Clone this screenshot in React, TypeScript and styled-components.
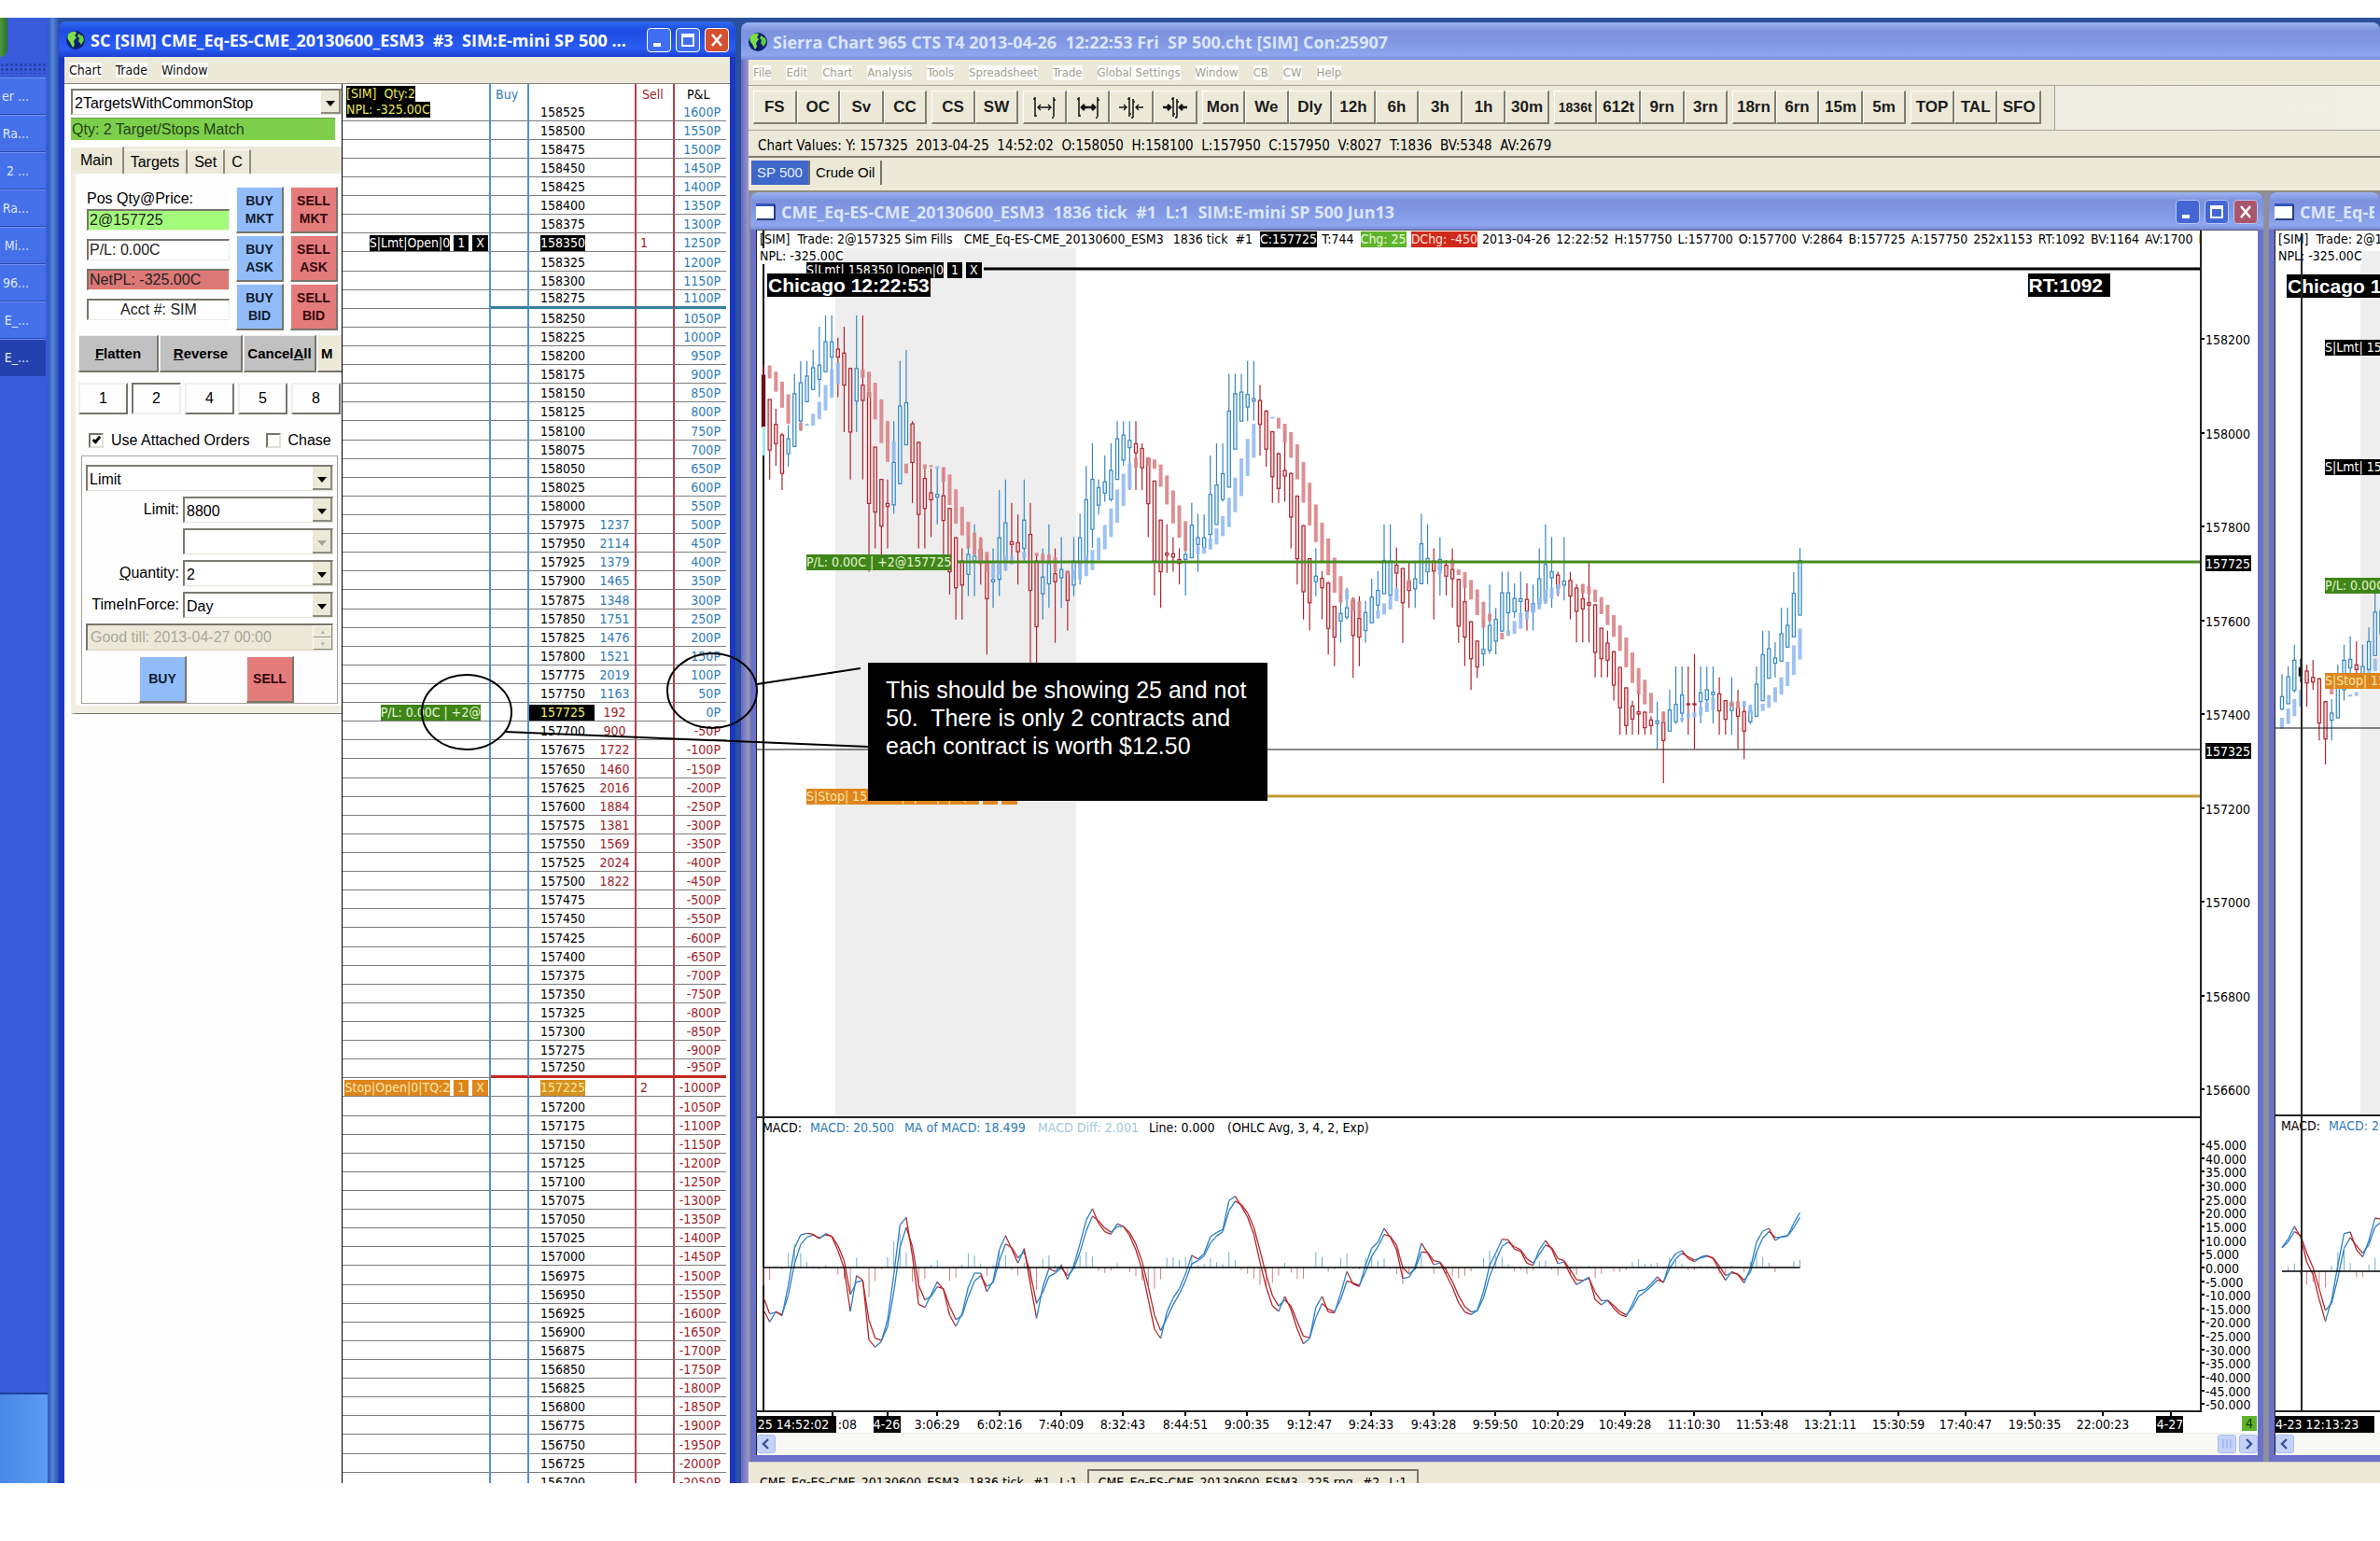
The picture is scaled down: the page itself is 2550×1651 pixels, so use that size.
import React from "react";
import styled, { createGlobalStyle, css } from "styled-components";

const UI = `"DejaVu Sans Condensed", "DejaVu Sans", sans-serif`;
const FORM = `"Liberation Sans", Arial, sans-serif`;
const TITLE = `"Open Sans", "Noto Sans", sans-serif`;

const BLUE = "#2f7db8";
const RED = "#a3222c";
const BEIGE = "#ece9d8";

const GlobalStyle = createGlobalStyle`
  *, *::before, *::after { box-sizing: border-box; }
  body { margin: 0; background: #fff; font-family: ${UI}; font-size: 14px; color: #000; }
  button, select, input { font: inherit; color: inherit; border-radius: 0; margin: 0; }
`;

const Page = styled.div`
  height: 100vh;
  padding: 19px 0 62px;
  overflow: hidden;
  white-space: nowrap;
`;

const Desktop = styled.div`
  position: relative;
  height: 100%;
  display: flex;
  overflow: hidden;
  background: #2a4f9c;
`;

/* ---------- taskbar ---------- */

const Taskbar = styled.nav`
  flex: 0 0 51px;
  display: flex;
  flex-direction: column;
  background: #3a5bdc;
  overflow: hidden;
`;

const StartOrb = styled.button`
  height: 42px;
  width: 8px;
  padding: 0;
  border: 0;
  border-radius: 0 8px 20px 0;
  background: linear-gradient(90deg, #4c9a3c, #2f6f2a);
`;

const Grip = styled.div`
  height: 12px;
  margin: 6px 2px 4px 0;
  background: radial-gradient(circle, #2441a8 1px, transparent 2px) 0 0 / 5px 5px;
`;

const TaskButton = styled.button<{ $active?: boolean }>`
  height: 40px;
  width: 49px;
  flex: none;
  padding: 0 18px 0 0;
  border: 0;
  border-top: 1px solid #6f93f4;
  border-bottom: 1px solid #2746b0;
  display: flex;
  justify-content: flex-end;
  align-items: center;
  color: #dfe8ff;
  background: ${(p) => (p.$active ? "#2440ae" : "#4470ea")};
`;

const Tray = styled.div`
  margin-top: auto;
  height: 97px;
  border-top: 2px solid #1f3f9c;
  background: linear-gradient(90deg, #4a88e4, #5a9cf4);
`;

const TaskbarEdge = styled.div`
  flex: 0 0 12px;
  background: linear-gradient(90deg, #2b56b8, #5584dc 45%, #2a50a8);
`;

/* ---------- window chrome ---------- */

const TitleBar = styled.header<{ $kind: "active" | "idle"; $h: number; $pad: number }>`
  flex: 0 0 ${(p) => p.$h}px;
  display: flex;
  align-items: center;
  gap: 5px;
  padding: 2px ${(p) => p.$pad}px 0;
  overflow: hidden;
  font: bold 18px/24px ${TITLE};
  white-space: pre;
  ${(p) =>
    p.$kind === "active"
      ? css`
          color: #fff;
          border-radius: 8px 8px 0 0;
          background: linear-gradient(#2f6cf0, #1c4be0 25%, #2a5cf4 75%, #1a3fd0);
        `
      : css`
          color: #dbe6fb;
          border-radius: 8px 8px 0 0;
          background: linear-gradient(#9db4f2, #7d92de 22%, #8096e2 50%, #8da6ee 88%, #7a88dc);
        `}
`;

const TitleText = styled.span`
  flex: 1;
  min-width: 0;
  overflow: hidden;
`;

const Buttons = styled.div<{ $gap: number }>`
  display: flex;
  gap: ${(p) => p.$gap}px;
`;

const CaptionButton = styled.button<{ $close?: boolean; $idle?: boolean }>`
  width: 26px;
  height: 26px;
  padding: 0;
  display: grid;
  place-items: center;
  border: 1px solid ${(p) => (p.$idle ? "#b9c7f4" : "#fff")};
  border-radius: 4px;
  background: ${(p) =>
    p.$close ? (p.$idle ? "#a9566c" : "#d4502e") : p.$idle ? "#4466d4" : "#3f6ff0"};
`;

const MenuBar = styled.nav<{ $h: number; $idle?: boolean }>`
  flex: 0 0 ${(p) => p.$h}px;
  display: flex;
  align-items: center;
  gap: ${(p) => (p.$idle ? 16 : 15)}px;
  padding: 0 5px;
  background: ${BEIGE};
  color: ${(p) => (p.$idle ? "#a3a196" : "#111")};
  font-size: ${(p) => (p.$idle ? 13 : 14)}px;
`;

const MenuItem = styled.button`
  padding: 0;
  border: 0;
  line-height: 16px;
  background: #fcfcf8;
`;

/* ---------- trade window ---------- */

const TradeWindow = styled.section`
  flex: 0 0 725px;
  margin: 4px 6px 0 0;
  display: flex;
  flex-direction: column;
  overflow: hidden;
`;

const TradeFrame = styled.div`
  flex: 1;
  min-height: 0;
  display: flex;
  flex-direction: column;
  border-left: 6px solid #1a38c4;
  border-right: 6px solid #1a38c4;
  background: #fff;
`;

const TradeBody = styled.div`
  flex: 1;
  min-height: 0;
  display: flex;
  overflow: hidden;
  border-top: 1px solid #88867c;
`;

const FormPanel = styled.form`
  flex: 0 0 298px;
  padding: 5px 0 0 7px;
  overflow: hidden;
  border-right: 1px solid #000;
  background: #fefefe;
  font: 16px/20px ${FORM};
`;

const SelectShell = styled.span<{ $disabled?: boolean }>`
  position: relative;
  display: block;
  height: 28px;
  flex: 1;
  border: 1px solid #e4e2d6;
  border-top: 2px solid #7b7a72;
  border-left: 2px solid #7b7a72;
  background: #fff;
  &::after {
    content: "";
    position: absolute;
    right: 6px;
    top: 11px;
    border: 5px solid transparent;
    border-top: 6px solid ${(p) => (p.$disabled ? "#a9a698" : "#000")};
    border-bottom: 0;
  }
  &::before {
    content: "";
    position: absolute;
    right: 0;
    top: 0;
    bottom: 0;
    width: 21px;
    background: ${BEIGE};
    border-right: 2px solid #8e8c80;
    border-bottom: 2px solid #8e8c80;
    pointer-events: none;
  }
`;

const Select = styled.select`
  width: 100%;
  height: 100%;
  padding: 2px 2px 0;
  border: 0;
  appearance: none;
  background: transparent;
  outline: 0;
`;

const StatusLine = styled.output`
  display: block;
  height: 24px;
  margin: 3px 7px 7px 0;
  line-height: 24px;
  padding-left: 1px;
  border-top: 1px solid #6a9c50;
  background: #7dcf4b;
  color: #24401a;
`;

const TabStrip = styled.div`
  height: 29px;
  display: flex;
  align-items: flex-end;
  background: ${BEIGE};
`;

const FormTab = styled.button<{ $on?: boolean }>`
  height: ${(p) => (p.$on ? 29 : 26)}px;
  padding: 0 ${(p) => (p.$on ? 10 : 7)}px;
  border: 0;
  border-top: 1px solid #fff;
  border-right: 2px solid #8e8c80;
  background: ${BEIGE};
`;

const TabPage = styled.div`
  padding: 14px 0 1px 3px;
  border-left: 5px solid #f1efe4;
  border-bottom: 1px solid #77756b;
  box-shadow: inset 0 -8px 0 #f1efe4;
  height: 579px;
`;

const TradeGrid = styled.div`
  display: grid;
  grid-template-columns: 153px 51px 51px;
  column-gap: 7px;
  padding-left: 9px;
`;

const ReadoutStack = styled.div`
  display: flex;
  flex-direction: column;
  gap: 9px;
`;

const StackLabel = styled.label`
  display: block;
  height: 24px;
  line-height: 26px;
`;

const Readout = styled.input<{ $bg?: string; $center?: boolean }>`
  width: 153px;
  height: 23px;
  padding: 0 1px;
  border: 1px solid #eceadf;
  border-top: 2px solid #77756b;
  border-left: 2px solid #77756b;
  background: ${(p) => p.$bg ?? "#fff"};
  text-align: ${(p) => (p.$center ? "center" : "left")};
  color: #222;
`;

const ButtonColumn = styled.div`
  display: flex;
  flex-direction: column;
  gap: 2px;
`;

const SideButton = styled.button<{ $side: "buy" | "sell" }>`
  width: 51px;
  height: 50px;
  padding: 0;
  font-weight: bold;
  font-size: 14px;
  line-height: 19px;
  white-space: normal;
  border: 1px solid #f5f5f5;
  border-right: 2px solid #77756b;
  border-bottom: 2px solid #77756b;
  background: ${(p) => (p.$side === "buy" ? "#92bcf9" : "#e57c7c")};
  color: ${(p) => (p.$side === "buy" ? "#101c30" : "#35080c")};
`;

const ActionRow = styled.div`
  display: grid;
  grid-template-columns: 86px 89px 78px 30px;
  gap: 1px;
  margin-top: 5px;
`;

const ActionButton = styled.button<{ $plain?: boolean }>`
  height: 40px;
  padding: 0 0 0 ${(p) => (p.$plain ? 3 : 0)}px;
  overflow: hidden;
  text-align: ${(p) => (p.$plain ? "left" : "center")};
  font-weight: bold;
  font-size: 15px;
  border: 1px solid #efefef;
  border-right: 2px solid #77756b;
  border-bottom: 2px solid #77756b;
  background: ${(p) => (p.$plain ? BEIGE : "#c1c1c1")};
`;

const QuantityRow = styled.div`
  display: grid;
  grid-template-columns: repeat(5, 53px);
  gap: 4px;
  margin-top: 11px;
`;

const QuantityButton = styled.button<{ $down?: boolean }>`
  height: 34px;
  padding: 0;
  background: #fefefe;
  border: 2px solid;
  border-color: ${(p) => (p.$down ? "#77756b #eee #eee #77756b" : "#eee #77756b #77756b #eee")};
`;

const CheckRow = styled.div`
  display: flex;
  gap: 17px;
  margin: 18px 0 6px 11px;
  height: 20px;
`;

const CheckLabel = styled.label`
  display: flex;
  align-items: center;
  gap: 8px;
`;

const Checkbox = styled.input`
  appearance: none;
  width: 16px;
  height: 16px;
  border: 2px solid;
  border-color: #77756b #e2e0d4 #e2e0d4 #77756b;
  background: #fff;
  display: grid;
  place-items: center;
  &:checked::after {
    content: "";
    width: 5px;
    height: 9px;
    margin-top: -3px;
    border: solid #000;
    border-width: 0 3px 3px 0;
    transform: rotate(40deg);
  }
`;

const OrderBox = styled.fieldset`
  margin: 0 4px 0 3px;
  min-width: 0;
  height: 266px;
  padding: 9px 4px 0 4px;
  border: 1px solid #a5a398;
  display: flex;
  flex-direction: column;
  gap: 6px;
`;

const FieldRow = styled.div`
  display: flex;
  align-items: center;
  gap: 4px;
`;

const FieldLabel = styled.label`
  flex: 0 0 100px;
  text-align: right;
`;

const DateBox = styled.div`
  display: flex;
  height: 30px;
  border: 1px solid #d4d1c2;
  border-top: 2px solid #77756b;
  border-left: 2px solid #77756b;
  background: ${BEIGE};
`;

const DateInput = styled.input`
  flex: 1;
  min-width: 0;
  padding: 0 3px;
  border: 0;
  background: transparent;
  &:disabled { color: #a9a698; }
`;

const Spinner = styled.div`
  width: 21px;
  display: flex;
  flex-direction: column;
`;

const SpinButton = styled.button`
  flex: 1;
  padding: 0;
  border: 1px solid #fff;
  border-right-color: #8e8c80;
  border-bottom-color: #8e8c80;
  background: ${BEIGE};
  color: #a9a698;
  font-size: 7px;
  line-height: 8px;
`;

const SubmitRow = styled.div`
  display: flex;
  justify-content: space-between;
  padding: 0 42px 0 57px;
`;

/* ---------- price ladder ---------- */

const Ladder = styled.table`
  flex: 0 0 411px;
  align-self: flex-start;
  table-layout: fixed;
  width: 411px;
  border-spacing: 0;
  font-size: 14px;
  line-height: 17px;
  th, td { padding: 0; font-weight: normal; text-align: left; overflow: hidden; }
  col:nth-child(1) { width: 159px; }
  col:nth-child(2) { width: 41px; }
  col:nth-child(3) { width: 70px; }
  col:nth-child(4) { width: 45px; }
  col:nth-child(5) { width: 41px; }
  col:nth-child(6) { width: 55px; }
`;

type Tone = "none" | "blue" | "red";
const toneColor = (t?: Tone) => (t === "blue" ? BLUE : t === "red" ? RED : "#000");
const lineColor = (t?: Tone) => (t === "blue" ? "#4a94d4" : "#b04048");

const HeadCell = styled.th<{ $line?: Tone; $tone?: Tone }>`
  && { overflow: visible; }
  position: relative;
  height: 20px;
  color: ${(p) => toneColor(p.$tone)};
  border-right: ${(p) => (p.$line ? `2px solid ${lineColor(p.$line)}` : 0)};
`;

const HeadText = styled.span<{ $pad: number }>`
  display: block;
  padding: 2px 0 0 ${(p) => p.$pad}px;
`;

const LadderRow = styled.tr<{ $mark?: string }>`
  height: 20px;
  &:nth-child(9n) { height: 21px; }
  td { border-bottom: 1px solid #7c7c7c; }
  ${(p) =>
    p.$mark &&
    css`
      td:not(:first-child) { border-bottom: 3px solid ${p.$mark}; }
    `}
`;

const Cell = styled.td<{ $line?: Tone; $tone?: Tone; $end?: boolean }>`
  && { text-align: ${(p) => (p.$end ? "right" : "left")}; }
  vertical-align: bottom;
  color: ${(p) => toneColor(p.$tone)};
  border-right: ${(p) => (p.$line ? `2px solid ${lineColor(p.$line)}` : 0)};
`;

const PnlText = styled.span`
  padding-right: 6px;
`;

const Price = styled.span<{ $bg?: string; $fg?: string; $wide?: boolean }>`
  display: inline-block;
  margin-left: ${(p) => (p.$wide ? 0 : 12)}px;
  width: ${(p) => (p.$wide ? "100%" : "auto")};
  padding-left: ${(p) => (p.$wide ? 12 : 0)}px;
  background: ${(p) => p.$bg ?? "transparent"};
  color: ${(p) => p.$fg ?? "#000"};
`;

const SizeText = styled.span`
  display: block;
  text-align: center;
`;

const OrderTags = styled.div<{ $inset: number }>`
  display: flex;
  justify-content: flex-end;
  gap: 4px;
  padding-right: ${(p) => p.$inset}px;
`;

const Tag = styled.span<{ $bg: string; $fg?: string; $box?: boolean }>`
  flex: none;
  height: 17px;
  line-height: 17px;
  padding: 0 ${(p) => (p.$box ? 4 : 0)}px;
  background: ${(p) => p.$bg};
  color: ${(p) => p.$fg ?? "#fff"};
  white-space: pre;
`;

const SimBadge = styled.div`
  position: absolute;
  left: 4px;
  top: 2px;
  z-index: 1;
  display: flex;
  flex-direction: column;
  align-items: flex-start;
`;

/* ---------- main chart application ---------- */

const MainWindow = styled.section`
  flex: 1;
  min-width: 0;
  margin-top: 5px;
  display: flex;
  flex-direction: column;
  overflow: hidden;
  border-radius: 8px 8px 0 0;
  background: linear-gradient(90deg, #6468c4, #9a98c8 8px);
`;

const MainBody = styled.div`
  flex: 1;
  min-height: 0;
  display: flex;
  flex-direction: column;
  margin-left: 8px;
  background: ${BEIGE};
`;

const Toolbar = styled.div`
  flex: 0 0 49px;
  display: flex;
  border-top: 1px solid #a8a698;
  border-bottom: 1px solid #a8a698;
  background: linear-gradient(90deg, ${BEIGE}, #efeee4);
`;

const ToolGroups = styled.div`
  flex: 0 0 1400px;
  display: flex;
  gap: 5px;
  padding: 5px 14px 6px 5px;
  border-right: 1px solid #a8a698;
  background: ${BEIGE};
`;

const ToolGroup = styled.div<{ $n: number }>`
  flex: ${(p) => p.$n} 1 0;
  display: flex;
`;

const ToolButton = styled.button<{ $small?: boolean }>`
  flex: 1 1 0;
  min-width: 0;
  padding: 0;
  display: grid;
  place-items: center;
  border: 1px solid #fff;
  border-right: 2px solid #807e72;
  border-bottom: 2px solid #807e72;
  background: ${BEIGE};
  font: bold ${(p) => (p.$small ? 14 : 17)}px/20px ${FORM};
  color: #1c1c1c;
`;

const ValuesBar = styled.div`
  flex: 0 0 29px;
  display: flex;
  align-items: center;
  padding: 4px 10px 0;
  border-bottom: 2px solid #807e72;
  font-size: 15px;
  white-space: pre;
`;

const BookTabs = styled.div`
  flex: 0 0 37px;
  display: flex;
  align-items: flex-start;
  padding: 3px 3px 0;
  border-bottom: 2px solid #8e8c80;
`;

const BookTab = styled.button<{ $on?: boolean }>`
  height: 26px;
  padding: 0 6px;
  border: 0;
  border-right: 2px solid #77756b;
  background: ${(p) => (p.$on ? "#3f66c9" : BEIGE)};
  color: ${(p) => (p.$on ? "#e4ecff" : "#000")};
  font: 15px/20px ${FORM};
`;

const Mdi = styled.div`
  flex: 1;
  min-height: 0;
  display: flex;
  gap: 6px;
  padding-left: 2px;
  background: #8d8f9c;
`;

const ChildWindow = styled.section<{ $width?: number }>`
  ${(p) => (p.$width ? `flex: 0 0 ${p.$width}px;` : "flex: 1;")}
  min-width: 0;
  display: flex;
  flex-direction: column;
  background: #6b70c8;
  overflow: hidden;
  border-radius: 8px 8px 0 0;
`;

const ChildBody = styled.div<{ $edge: number }>`
  flex: 1;
  min-height: 0;
  margin: 0 ${(p) => p.$edge}px 7px 6px;
  display: flex;
  flex-direction: column;
  background: #fff;
  border-left: 1px solid #222;
  border-top: 1px solid #555;
`;

const PlotRow = styled.div`
  flex: 1;
  min-height: 0;
  display: flex;
`;

const Plot = styled.div`
  position: relative;
  flex: 1;
  min-width: 0;
  overflow: hidden;
  border-bottom: 2px solid #222;
`;

const Canvas = styled.svg`
  display: block;
  width: 100%;
  height: 100%;
`;

const TimeCanvas = styled.svg`
  display: block;
  width: 100%;
  height: 22px;
`;

const Axis = styled.div`
  flex: 0 0 62px;
  border-left: 2px solid #222;
`;

const HeaderLine = styled.div`
  position: absolute;
  top: 1px;
  left: 3px;
  line-height: 17px;
  white-space: pre;
  display: flex;
`;

const SecondLine = styled(HeaderLine)`
  top: 19px;
  background: #fff;
`;

const Pin = styled.div<{ $x: number; $y: number; $right?: boolean }>`
  position: absolute;
  ${(p) => (p.$right ? `right: ${p.$x}px;` : `left: ${p.$x}px;`)}
  top: ${(p) => p.$y}px;
  display: flex;
  gap: 4px;
`;

const Banner = styled.div<{ $tail?: number }>`
  height: 25px;
  padding: 0 ${(p) => p.$tail ?? 1}px 0 1px;
  background: #000;
  color: #fff;
  font: bold 21px/25px ${FORM};
`;

const Segment = styled.span<{ $bg?: string; $fg?: string; $gap?: number }>`
  background: ${(p) => p.$bg ?? "transparent"};
  color: ${(p) => p.$fg ?? "#000"};
  margin-right: ${(p) => p.$gap ?? 6}px;
`;

const TimeRow = styled.div`
  position: relative;
  flex: 0 0 22px;
`;

const CornerBadge = styled.span`
  position: absolute;
  right: 1px;
  top: 4px;
  width: 16px;
  line-height: 16px;
  text-align: center;
  background: #5fb32c;
  color: #173a05;
`;

const ScrollTrack = styled.div`
  flex: 0 0 24px;
  display: flex;
  gap: 3px;
  background: #f8f8f4;
  border-top: 1px solid #eeede6;
`;

const ScrollButton = styled.button<{ $push?: boolean }>`
  width: 20px;
  height: 20px;
  margin: 1px 0 0 ${(p) => (p.$push ? "auto" : 0)};
  padding: 0;
  display: grid;
  place-items: center;
  border: 1px solid #a9bcf0;
  border-radius: 3px;
  background: #c5d3fb;
`;

const BottomTabs = styled.div`
  flex: 0 0 23px;
  padding: 7px 0 0 2px;
  display: flex;
  overflow: hidden;
  background: ${BEIGE};
  border-top: 1px solid #cfccbd;
`;

const BottomTab = styled.button<{ $on?: boolean }>`
  height: 34px;
  padding: 4px 10px 0;
  border: 0;
  border-top: 2px solid ${(p) => (p.$on ? "#77756b" : BEIGE)};
  border-left: ${(p) => (p.$on ? "2px solid #77756b" : 0)};
  border-right: ${(p) => (p.$on ? "2px solid #77756b" : 0)};
  background: ${BEIGE};
  display: flex;
  gap: 10px;
  font-size: 14px;
`;

const Crosshair = styled.div`
  position: absolute;
  left: 27px;
  top: 3px;
  bottom: 0;
  border-left: 2px solid #222;
`;

/* ---------- annotations ---------- */

const AnnotationLayer = styled.svg`
  position: absolute;
  left: 0;
  top: 0;
  width: 1400px;
  height: 900px;
  pointer-events: none;
`;

const Note = styled.aside`
  position: absolute;
  left: 930px;
  top: 691px;
  width: 428px;
  height: 148px;
  padding: 14px 19px;
  background: #000;
  color: #fff;
  font: 25px/30px ${FORM};
  white-space: pre;
`;

/* ---------- data ---------- */

type Bar = [string, number, number, number, number];
// direction, high, body top, body bottom, low
const EARLY: Bar[] = [
  ["r",200,232,387,390],["r",305,305,457,545],["r",333,380,438,505],["r",405,412,527,577],["b",382,423,468,507],
  ["b",228,288,446,446],["b",190,255,370,400],["b",190,235,312,312],["b",157,210,275,275],["b",87,202,245,298],
  ["b",53,132,222,222],["b",53,132,178,285],["r",120,154,178,298],["r",87,166,262,403],["r",210,212,403,545],
  ["b",53,212,310,403],["r",53,262,308,545],["r",285,285,617,822],["r",448,448,643,752],["r",545,545,685,787],
  ["r",545,617,626,752],["b",370,494,621,648],["b",190,325,558,558],["b",157,315,441,441],["r",370,378,494,615],
  ["r",432,434,650,752],["r",512,542,632,752],["r",512,585,606,718],["b",512,590,598,680],["r",512,594,668,787],
  ["r",630,632,822,890],["r",718,720,870,965],["r",752,790,862,965],["b",715,770,830,895],["b",680,775,790,895],
  ["r",718,755,797,860],["r",770,790,903,1070],["b",752,845,852,930],["b",577,720,845,895],["b",545,675,787,820],
  ["r",615,732,740,787],["r",650,735,762,860],["b",545,667,752,790],["r",615,710,878,1095],["r",770,790,987,1120],
  ["b",752,838,888,965],["b",680,790,858,930],["r",752,828,852,1035],["b",718,815,840,930],["r",820,824,908,998],
  ["b",718,790,862,895],["b",648,720,800,860],["b",505,606,790,800],["b",437,545,695,750],["b",545,570,622,650],
  ["b",473,552,586,612],["b",437,518,605,612],["b",370,423,545,545],["b",370,412,487,505],["b",370,428,450,577],
  ["r",370,438,465,577],["r",437,452,510,577],["r",480,482,618,718],["r",548,550,790,893],["r",667,667,822,930],
  ["r",680,766,772,825],["r",718,768,778,822],["r",752,785,797,860],["b",680,770,785,893],["b",615,682,780,780],
  ["b",648,720,740,822],["b",650,720,750,755],["b",473,590,710,750],["b",437,562,680,680],["b",437,528,605,612],
  ["b",228,340,568,568],["b",228,288,454,454],["b",228,283,370,370],["b",190,290,328,370],["b",190,303,310,368],
  ["r",262,308,380,473],["r",337,340,454,507],["r",400,402,537,615],["r",465,468,572,615],["r",400,518,535,612],
  ["r",525,527,658,752],["r",593,595,783,860],["r",682,684,882,965],["r",782,783,915,998],["b",752,835,852,895],
  ["r",820,842,870,965],["r",852,856,992,1070],["r",925,926,1018,1105],["b",893,947,970,1035],["b",870,930,958,965],
  ["r",898,908,1013,1140],["r",895,962,1018,1105],["b",910,945,998,1035],["b",843,898,975,975],["b",820,878,922,945],
  ["b",680,788,888,888],["b",680,790,892,895],["r",750,802,826,870],["r",812,812,915,1035],["r",790,852,878,930],
  ["b",790,843,873,930],["b",648,738,858,858],["b",680,782,822,860],["r",752,790,820,965],["b",718,785,815,893],
  ["r",787,802,835,893],["r",752,815,843,930],["r",843,845,985,1035],["r",860,912,1018,1105],["r",970,972,1083,1177],
  ["r",1028,1030,1108,1140],["b",965,1055,1068,1105],["b",860,983,1058,1068],["b",930,965,1030,1070],["b",822,885,1000,1000],
  ["b",822,885,945,1005],["b",857,902,942,960],["b",822,903,911,960],["r",857,905,940,998],["b",860,918,940,998],
  ["b",752,843,918,930],["b",680,800,908,915],["b",718,822,840,930],["r",822,832,870,895],["b",718,850,862,908],
  ["r",822,848,895,965],
];
const LATE: Bar[] = [
  ["r",440,453,528,628],["r",440,488,520,628],["r",366,500,508,628],["r",505,507,660,740],["r",582,582,680,740],
  ["r",590,630,685,740],["r",655,658,765,815],["r",708,708,838,925],["r",772,774,895,925],["r",815,832,874,925],
  ["r",780,851,858,925],["r",850,852,902,925],["r",865,877,895,925],["b",818,880,888,970],["r",850,885,943,1080],
  ["b",780,845,913,913],["b",705,827,883,890],["b",705,797,855,885],["r",705,825,828,925],["r",665,825,828,970],
  ["b",705,790,818,888],["b",705,780,812,850],["b",705,788,796,888],["r",740,793,848,925],["r",812,815,875,925],
  ["b",740,825,847,925],["r",780,838,865,970],["r",817,850,913,1003],["b",828,850,883,890],["b",705,762,865,868],
  ["b",590,667,815,815],["b",590,648,743,743],["b",628,678,695,740],["b",517,600,688,688],["b",517,573,643,643],
  ["b",402,470,610,610],["b",325,365,540,540],
];
type Shade = [number, string, number, number];
const EARLY_SHADES: Shade[] = [
  [1,"r",203,242],[2,"r",222,282],[3,"r",252,330],[4,"r",290,378],[6,"r",375,398],[7,"b",378,384],[8,"b",348,384],[9,"b",312,364],
  [10,"b",262,338],[11,"b",215,300],[12,"b",195,260],[16,"r",215,240],[17,"r",222,300],[18,"r",255,365],[19,"r",305,436],[20,"r",370,492],
  [21,"b",430,490],[23,"r",498,527],[26,"r",500,512],[27,"r",502,508],[28,"b",505,513],[29,"r",508,552],[30,"r",530,622],[31,"r",575,678],
  [32,"r",627,713],[33,"r",672,752],[34,"r",705,770],[35,"r",720,800],[36,"r",762,822],[37,"b",795,840],[38,"b",790,832],[39,"b",775,818],
  [40,"b",775,800],[42,"b",762,782],[44,"r",765,775],[45,"r",768,790],[46,"r",770,800],[47,"r",778,822],[49,"r",818,830],[50,"b",815,845],
  [51,"b",790,845],[52,"b",775,835],[53,"b",757,817],[54,"b",720,787],[55,"b",682,755],[56,"b",632,718],[57,"b",575,675],[58,"b",528,625],
  [59,"b",497,575],[60,"r",480,510],[62,"r",480,505],[63,"r",485,513],[64,"r",500,567],[65,"r",533,620],[66,"r",578,677],[67,"r",623,720],
  [68,"r",670,760],[70,"b",745,770],[71,"b",748,768],[72,"b",722,755],[73,"b",692,740],[74,"b",655,715],[75,"b",600,688],[76,"b",540,643],
  [77,"b",482,595],[78,"b",423,535],[79,"b",378,480],[82,"b",357,363],[83,"r",360,393],[84,"r",378,435],[85,"r",403,480],[86,"r",440,545],
  [87,"r",493,615],[88,"r",555,683],[89,"r",620,733],[90,"r",675,790],[91,"r",722,832],[92,"r",780,885],[93,"r",835,915],[94,"b",875,905],
  [95,"r",900,940],[96,"r",910,960],[99,"b",938,962],[100,"b",917,950],[101,"b",893,935],[102,"b",870,910],[104,"r",845,870],[109,"b",790,830],
  [111,"r",785,810],[112,"r",815,832],[113,"r",823,870],[114,"r",847,905],[115,"r",875,952],[116,"r",912,990],[117,"r",948,970],
  [119,"r",1005,1025],[120,"b",998,1015],[121,"b",970,1008],[122,"b",945,993],[123,"b",940,965],[124,"b",920,945],[125,"b",900,935],
  [126,"b",875,918],[127,"b",870,903],[128,"b",860,890],
];
const LATE_SHADES: Shade[] = [
  [132,"r",440,470],[133,"r",447,473],[134,"r",458,498],[135,"r",482,537],[136,"r",507,572],[137,"r",540,610],[138,"r",573,655],
  [139,"r",612,708],[140,"r",660,758],[141,"r",710,795],[142,"r",748,827],[143,"r",790,855],[145,"r",850,885],[148,"b",870,880],
  [149,"b",855,872],[150,"b",852,870],[151,"b",835,862],[152,"b",820,852],[153,"b",805,845],[156,"r",817,835],[157,"r",817,840],
  [158,"b",817,835],[159,"b",828,855],[161,"b",825,848],[162,"b",797,838],[163,"b",772,820],[164,"b",740,795],[165,"b",690,768],
  [166,"b",637,732],[167,"b",583,683],
];
const SIDE_BARS: Bar[] = [
  ["b",730,802,842,845],["b",705,738,825,825],["b",635,685,782,790],["k",680,710,735,755],["r",700,720,758,835],["r",685,740,755,780],
  ["r",742,745,887,943],["r",815,818,938,1020],["b",810,855,878,943],["b",700,755,870,872],["b",635,685,780,815],["b",608,682,710,770],
  ["r",625,700,715,740],["b",635,705,750,760],["b",580,625,715,715],["b",465,530,670,670],["b",500,525,600,640],
];
const SIDE_SHADES: Shade[] = [
  [0,"b",870,905],[1,"b",840,890],[2,"b",810,865],[3,"b",780,835],[8,"r",745,795],[11,"b",795,802],[12,"b",788,800],[14,"b",700,775],[15,"b",680,720],
];
const MACD = [
  672,712,678,692,595,475,432,427,430,445,428,438,482,540,678,563,578,770,793,775,705,560,400,376,500,655,665,625,583,608,690,726,685,600,
  555,555,615,580,480,434,478,523,476,590,700,600,540,550,530,575,530,460,385,348,395,422,430,396,405,435,480,545,640,735,765,680,635,605,
  558,498,510,492,438,425,415,322,308,340,375,430,520,600,660,678,630,672,735,782,765,665,630,680,683,620,550,590,598,530,475,455,411,440,
  480,572,568,535,459,490,528,522,560,600,650,680,688,675,615,530,490,446,448,478,485,523,530,480,450,478,525,518,560,592,580,568,640,657,
  642,668,688,695,655,612,608,590,567,586,520,492,483,508,518,503,498,508,545,578,550,560,587,540,455,420,411,450,438,435,395,360,
];
const SIDE_MACD = [473,445,405,440,520,560,640,710,640,530,428,423,480,503,450,378,382];

const STEP = 6.65;
const earlyY = (v: number) => 72 + v / 2.8;
const lateY = (v: number) => 232 + v / 3;
const macdY = (v: number) => 932 + v / 3;

const strokes: Record<string, string> = { r: "#ab2630", b: "#3a86c0", k: "#111" };
const fills: Record<string, string> = { r: "#f8dada", b: "#e2f5fd", k: "#111" };
const shadeFills: Record<string, string> = { r: "#d98487", b: "#94bbf0" };

function Candle({ x, bar, y }: { x: number; bar: Bar; y: (v: number) => number }) {
  const [dir, high, top, bottom, low] = bar;
  return (
    <g stroke={strokes[dir]} strokeWidth={1.2}>
      <line x1={x} x2={x} y1={y(high)} y2={y(low)} />
      <rect x={x - 1.6} width={3.2} y={y(top)} height={Math.max(1, y(bottom) - y(top))} fill={fills[dir]} />
    </g>
  );
}

function Shades({ x0, data, y }: { x0: number; data: Shade[]; y: (v: number) => number }) {
  return (
    <>
      {data.map(([i, dir, a, b]) => (
        <rect key={i} x={x0 + i * STEP - 2} width={4} y={y(a)} height={y(b) - y(a)} fill={shadeFills[dir]} opacity={0.9} />
      ))}
    </>
  );
}

function MacdLines({ x0, values, zero, seed }: { x0: number; values: number[]; zero: number; seed: number }) {
  const avg: number[] = [];
  values.forEach((v, i) => avg.push(i === 0 ? seed : avg[i - 1] / 3 + (v * 2) / 3));
  const trace = (s: number[]) =>
    s.slice(1).map((v, i) => (
      <line
        key={i}
        x1={x0 + i * STEP}
        x2={x0 + (i + 1) * STEP}
        y1={macdY(s[i])}
        y2={macdY(v)}
        stroke={v > s[i] ? "#b3282c" : "#2f7fc4"}
        strokeWidth={1.3}
      />
    ));
  return (
    <g>
      {values.map((v, i) => {
        const d = (v - avg[i]) / 2;
        return <line key={i} x1={x0 + i * STEP} x2={x0 + i * STEP} y1={zero} y2={zero + d} stroke={d > 0 ? "#c98080" : "#6fb0cc"} />;
      })}
      {trace(values)}
      {trace(avg)}
      <line x1={x0} x2={x0 + (values.length - 1) * STEP} y1={zero} y2={zero} stroke="#000" strokeWidth={1.5} />
    </g>
  );
}

/* ---------- icons ---------- */

const Globe = () => (
  <svg width="22" height="22" viewBox="0 0 22 22" aria-hidden="true">
    <circle cx="11" cy="11" r="10" fill="#0c1f6e" />
    <path d="M3 5c3-4 8-4 9-2l-2 3 2 2-3 4 1 4-2 3c-2-3-2-5-4-7-2-2-2-5-1-7z" fill="#7be04a" />
    <path d="M14 4l5 3 1 4-3 5-3-4 1-3-2-2z" fill="#5fcf3c" />
  </svg>
);
const DocIcon = () => (
  <svg width="22" height="18" viewBox="0 0 22 18" aria-hidden="true">
    <rect width="20" height="17" fill="#fff" />
    <rect width="20" height="3" fill="#2f55b8" />
    <path d="M20 1v16H1" stroke="#2b3f80" strokeWidth="2" fill="none" />
  </svg>
);
const Caption = ({ idle, gap }: { idle?: boolean; gap: number }) => (
  <Buttons $gap={gap}>
    <CaptionButton $idle={idle} aria-label="Minimize">
      <svg width="18" height="18"><rect x="3" y="12" width="8" height="4" fill="#fff" /></svg>
    </CaptionButton>
    <CaptionButton $idle={idle} aria-label="Maximize">
      <svg width="18" height="18"><path d="M3 3h12v12H3zM3 5h12" stroke="#fff" strokeWidth="2" fill="none" /></svg>
    </CaptionButton>
    <CaptionButton $idle={idle} $close aria-label="Close">
      <svg width="18" height="18"><path d="M4 3l10 12M14 3L4 15" stroke="#fff" strokeWidth="2.6" /></svg>
    </CaptionButton>
  </Buttons>
);
const Spacing = ({ inward, bold }: { inward?: boolean; bold?: boolean }) => (
  <svg width="28" height="28" viewBox="0 0 28 28" fill="none" stroke="#111" aria-hidden="true">
    {inward ? (
      <>
        <path d="M12 3v21M16 5v20M10 5h2M12 21h2M16 8h2M14 25h2" strokeWidth="1.5" />
        <path d="M1 14h8M6 11l3 3-3 3M27 14h-8M22 11l-3 3 3 3" strokeWidth={bold ? 2.6 : 1.3} />
      </>
    ) : (
      <>
        <path d="M4 3v21M24 3v21M2 5h2M4 23h2M24 6h2M22 25h2" strokeWidth="1.5" />
        <path d="M7 14h14M10 11l-3 3 3 3M18 11l3 3-3 3" strokeWidth={bold ? 2.6 : 1.3} />
      </>
    )}
  </svg>
);
const Chevron = ({ right }: { right?: boolean }) => (
  <svg width="12" height="14"><path d={right ? "M4 2l5 5-5 5" : "M8 2L3 7l5 5"} stroke="#3a4f96" strokeWidth="2.4" fill="none" /></svg>
);

/* ---------- parts ---------- */

function Field({ id, label, value, disabled }: { id: string; label: React.ReactNode; value: string; disabled?: boolean }) {
  return (
    <FieldRow>
      <FieldLabel htmlFor={id}>{label}</FieldLabel>
      <SelectShell $disabled={disabled}>
        <Select id={id} disabled={disabled}><option>{value}</option></Select>
      </SelectShell>
    </FieldRow>
  );
}

function TradeForm() {
  return (
    <FormPanel>
      <SelectShell>
        <Select aria-label="Trade configuration"><option>2TargetsWithCommonStop</option></Select>
      </SelectShell>
      <StatusLine>Qty: 2 Target/Stops Match</StatusLine>
      <TabStrip>
        {["Main", "Targets", "Set", "C"].map((t, i) => (
          <FormTab key={t} type="button" $on={i === 0}>{t}</FormTab>
        ))}
      </TabStrip>
      <TabPage>
        <TradeGrid>
          <div>
            <StackLabel htmlFor="pos">Pos Qty@Price:</StackLabel>
            <ReadoutStack>
              <Readout id="pos" readOnly $bg="#a3fb7c" defaultValue="2@157725" />
              <Readout readOnly aria-label="Open profit" defaultValue="P/L: 0.00C" />
              <Readout readOnly aria-label="Net profit" $bg="#dc7876" defaultValue="NetPL: -325.00C" />
              <Readout readOnly aria-label="Account" $center defaultValue="Acct #: SIM" />
            </ReadoutStack>
          </div>
          {(["buy", "sell"] as const).map((side) => (
            <ButtonColumn key={side}>
              {["MKT", "ASK", "BID"].map((k) => (
                <SideButton key={k} type="button" $side={side}>
                  {side.toUpperCase()}<br />{k}
                </SideButton>
              ))}
            </ButtonColumn>
          ))}
        </TradeGrid>
        <ActionRow>
          <ActionButton type="button"><u>F</u>latten</ActionButton>
          <ActionButton type="button"><u>R</u>everse</ActionButton>
          <ActionButton type="button">Cancel<u>A</u>ll</ActionButton>
          <ActionButton type="button" $plain>M</ActionButton>
        </ActionRow>
        <QuantityRow>
          {["1", "2", "4", "5", "8"].map((n) => (
            <QuantityButton key={n} type="button" $down={n === "2"}>{n}</QuantityButton>
          ))}
        </QuantityRow>
        <CheckRow>
          <CheckLabel><Checkbox type="checkbox" defaultChecked />Use Attached Orders</CheckLabel>
          <CheckLabel><Checkbox type="checkbox" />Chase</CheckLabel>
        </CheckRow>
        <OrderBox>
          <FieldRow>
            <SelectShell>
              <Select aria-label="Order type"><option>Limit</option></Select>
            </SelectShell>
          </FieldRow>
          <Field id="limit" label="Limit:" value="8800" />
          <Field id="second" label="" value="" disabled />
          <Field id="qty" label={<><u>Q</u>uantity:</>} value="2" />
          <Field id="tif" label="TimeInForce:" value="Day" />
          <DateBox>
            <DateInput aria-label="Good till" defaultValue="Good till: 2013-04-27 00:00" disabled />
            <Spinner>
              <SpinButton type="button" disabled aria-label="Later">▴</SpinButton>
              <SpinButton type="button" disabled aria-label="Earlier">▾</SpinButton>
            </Spinner>
          </DateBox>
          <SubmitRow>
            <SideButton $side="buy" type="button">BUY</SideButton>
            <SideButton $side="sell" type="button">SELL</SideButton>
          </SubmitRow>
        </OrderBox>
      </TabPage>
    </FormPanel>
  );
}

const SIZES: Record<number, number> = {
  157975: 1237, 157950: 2114, 157925: 1379, 157900: 1465, 157875: 1348, 157850: 1751, 157825: 1476, 157800: 1521,
  157775: 2019, 157750: 1163, 157725: 192, 157700: 900, 157675: 1722, 157650: 1460, 157625: 2016, 157600: 1884,
  157575: 1381, 157550: 1569, 157525: 2024, 157500: 1822,
};
const PRICES = Array.from({ length: 74 }, (_, i) => 158525 - i * 25);
const ORANGE = "#de851d";
const GREEN = "#3f8519";
const CREAM = "#fbe7a8";
const MINT = "#e2f5cf";

function PriceLadder() {
  return (
    <Ladder>
      <colgroup><col /><col /><col /><col /><col /><col /></colgroup>
      <thead>
        <tr>
          <HeadCell $line="blue">
            <SimBadge>
              <Tag $bg="#000" $fg="#e6e65a">[SIM]  Qty:2</Tag>
              <Tag $bg="#000" $fg="#e6e65a">NPL: -325.00C</Tag>
            </SimBadge>
          </HeadCell>
          <HeadCell $line="blue" $tone="blue"><HeadText $pad={5}>Buy</HeadText></HeadCell>
          <HeadCell colSpan={2} $line="red" />
          <HeadCell $line="red" $tone="red"><HeadText $pad={6}>Sell</HeadText></HeadCell>
          <HeadCell><HeadText $pad={13}>P&amp;L</HeadText></HeadCell>
        </tr>
      </thead>
      <tbody>
        {PRICES.map((p) => {
          const pnl = (p - 157725) * 2;
          const tone: Tone = pnl < 0 ? "red" : "blue";
          const mark = p === 158275 ? "#35819f" : p === 157250 ? "#c4281c" : undefined;
          return (
            <LadderRow key={p} $mark={mark}>
              <Cell $line="blue">
                {p === 158350 && (
                  <OrderTags $inset={1}>
                    <Tag $bg="#000">S|Lmt|Open|0</Tag><Tag $bg="#000" $box>1</Tag><Tag $bg="#000" $box>X</Tag>
                  </OrderTags>
                )}
                {p === 157725 && (
                  <OrderTags $inset={9}><Tag $bg={GREEN} $fg={MINT}>P/L: 0.00C | +2@</Tag></OrderTags>
                )}
                {p === 157225 && (
                  <OrderTags $inset={1}>
                    <Tag $bg={ORANGE} $fg={CREAM}>Stop|Open|0|TQ:2</Tag>
                    <Tag $bg={ORANGE} $fg={CREAM} $box>1</Tag>
                    <Tag $bg={ORANGE} $fg={CREAM} $box>X</Tag>
                  </OrderTags>
                )}
              </Cell>
              <Cell $line="blue" />
              <Cell>
                <Price
                  $wide={p === 157725}
                  $bg={p === 158350 || p === 157725 ? "#000" : p === 157225 ? "#d6901f" : undefined}
                  $fg={p === 158350 ? "#fff" : p === 157725 ? "#f4f060" : p === 157225 ? "#f9e89a" : undefined}
                >
                  {p}
                </Price>
              </Cell>
              <Cell $line="red" $tone={p >= 157750 ? "blue" : "red"}><SizeText>{SIZES[p]}</SizeText></Cell>
              <Cell $line="red" $tone="red"><HeadText $pad={4}>{p === 158350 ? 1 : p === 157225 ? 2 : ""}</HeadText></Cell>
              <Cell $tone={tone} $end><PnlText>{pnl}P</PnlText></Cell>
            </LadderRow>
          );
        })}
      </tbody>
    </Ladder>
  );
}

const GROUPS: string[][] = [
  ["FS", "OC", "Sv", "CC"],
  ["CS", "SW"],
  ["wide", "wideBold", "tight", "tightBold"],
  ["Mon", "We", "Dly", "12h", "6h", "3h", "1h", "30m"],
  ["1836t", "612t", "9rn", "3rn"],
  ["18rn", "6rn", "15m", "5m"],
  ["TOP", "TAL", "SFO"],
];
const glyphs: Record<string, React.ReactNode> = {
  wide: <Spacing />,
  wideBold: <Spacing bold />,
  tight: <Spacing inward />,
  tightBold: <Spacing inward bold />,
};

const TIMES: [number, string][] = [
  [193, "3:06:29"], [260, "6:02:16"], [326, "7:40:09"], [392, "8:32:43"], [459, "8:44:51"], [525, "9:00:35"], [592, "9:12:47"],
  [658, "9:24:33"], [725, "9:43:28"], [791, "9:59:50"], [858, "10:20:29"], [930, "10:49:28"], [1004, "11:10:30"], [1077, "11:53:48"],
  [1150, "13:21:11"], [1223, "15:30:59"], [1295, "17:40:47"], [1369, "19:50:35"], [1442, "22:00:23"],
];

const QUOTE = ["2013-04-26", "12:22:52", "H:157750", "L:157700", "O:157700", "V:2864", "B:157725", "A:157750", "252x1153", "RT:1092", "BV:1164", "AV:1700", "D"];

const TextLayer = styled.g`
  font: 14px ${UI};
  fill: #000;
`;
const Label = styled.text<{ $color?: string }>`
  fill: ${(p) => p.$color ?? "#000"};
`;

function MainChart() {
  const x0 = 7;
  return (
    <ChildBody $edge={6}>
      <PlotRow>
        <Plot>
          <Canvas>
            <rect x="84" y="19" width="258" height="930" fill="#eeeeee" />
            <line x1="7" x2="7" y1="0" y2="100%" stroke="#000" strokeWidth="2" />
            {EARLY.map((b, i) => <Candle key={i} x={x0 + i * STEP} bar={b} y={earlyY} />)}
            {LATE.map((b, i) => <Candle key={i} x={x0 + (131 + i) * STEP} bar={b} y={lateY} />)}
            <Shades x0={x0} data={EARLY_SHADES} y={earlyY} />
            <Shades x0={x0} data={LATE_SHADES} y={lateY} />
            <rect x="5" y="155" width="4" height="55" fill="#6a1014" />
            <rect x="6" y="210" width="3" height="31" fill="#9fe8f0" />
            <line x1="243" x2="100%" y1="41" y2="41" stroke="#000" strokeWidth="3" />
            <line x1="215" x2="100%" y1="355" y2="355" stroke="#478a1f" strokeWidth="3" />
            <line x1="0" x2="100%" y1="556" y2="556" stroke="#111" strokeWidth="1" />
            <line x1="287" x2="100%" y1="606" y2="606" stroke="#c39a34" strokeWidth="3" />
            <line x1="0" x2="100%" y1="950" y2="950" stroke="#222" strokeWidth="2" />
            <MacdLines x0={x0} values={MACD} zero={1111} seed={633} />
            <TextLayer>
              <Label x="6" y="966">MACD:</Label>
              <Label x="57" y="966" $color={BLUE}>MACD: 20.500</Label>
              <Label x="158" y="966" $color={BLUE}>MA of MACD: 18.499</Label>
              <Label x="301" y="966" $color="#a5c8dc">MACD Diff: 2.001</Label>
              <Label x="420" y="966">Line: 0.000</Label>
              <Label x="504" y="966">(OHLC Avg, 3, 4, 2, Exp)</Label>
            </TextLayer>
          </Canvas>
          <HeaderLine>
            <Segment $gap={12}>[SIM]  Trade: 2@157325 Sim Fills</Segment>
            <Segment $gap={10}>CME_Eq-ES-CME_20130600_ESM3</Segment>
            <Segment $gap={8}>1836 tick  #1</Segment>
            <Segment $bg="#000" $fg="#fff" $gap={5}>C:157725</Segment>
            <Segment $gap={7}>T:744</Segment>
            <Segment $bg="#5fb32c" $fg="#e8fbd8" $gap={5}>Chg: 25</Segment>
            <Segment $bg="#cf2a1c" $fg="#ffe0d8" $gap={5}>DChg: -450</Segment>
            {QUOTE.map((q) => <Segment key={q}>{q}</Segment>)}
          </HeaderLine>
          <SecondLine>NPL: -325.00C</SecondLine>
          <Pin $x={53} $y={34}>
            <Tag $bg="#000">S|Lmt| 158350 |Open|0</Tag><Tag $bg="#000" $box>1</Tag><Tag $bg="#000" $box>X</Tag>
          </Pin>
          <Pin $x={11} $y={46}><Banner>Chicago 12:22:53</Banner></Pin>
          <Pin $x={96} $y={46} $right><Banner $tail={8}>RT:1092</Banner></Pin>
          <Pin $x={53} $y={347}><Tag $bg={GREEN} $fg={MINT}>P/L: 0.00C | +2@157725</Tag></Pin>
          <Pin $x={53} $y={598}>
            <Tag $bg={ORANGE} $fg={CREAM}>S|Stop| 157225 |Open|0|TQ:2</Tag><Tag $bg={ORANGE} $fg={CREAM} $box>1</Tag><Tag $bg={ORANGE} $fg={CREAM} $box>X</Tag>
          </Pin>
        </Plot>
        <Axis>
          <Canvas>
            <TextLayer>
              {Array.from({ length: 9 }, (_, i) => {
                const y = 116 + Math.round(i * 100.5);
                return (
                  <g key={i}>
                    <line x1="0" x2="3" y1={y} y2={y} stroke="#000" strokeWidth="2" />
                    <Label x="4" y={y + 6}>{158200 - i * 200}</Label>
                  </g>
                );
              })}
              {[[355, 157725], [556, 157325]].map(([y, v]) => (
                <g key={v}>
                  <rect x="4" y={y - 7} width="49" height="17" fill="#000" />
                  <Label x="4" y={y + 7} $color="#fff">{v}</Label>
                </g>
              ))}
              {Array.from({ length: 20 }, (_, i) => {
                const y = Math.round(979 + i * 14.65);
                return (
                  <g key={i}>
                    <line x1="0" x2="3" y1={y} y2={y} stroke="#000" strokeWidth="2" />
                    <Label x="4" y={y + 6}>{(45 - i * 5).toFixed(3)}</Label>
                  </g>
                );
              })}
            </TextLayer>
          </Canvas>
        </Axis>
      </PlotRow>
      <TimeRow>
        <TimeCanvas>
          <TextLayer textAnchor="middle">
            <rect x="0" y="4" width="85" height="18" fill="#000" />
            <Label x="39" y="18" $color="#fff">25 14:52:02</Label>
            <Label x="97" y="18">:08</Label>
            <rect x="125" y="4" width="29" height="18" fill="#000" />
            <Label x="139" y="18" $color="#fff">4-26</Label>
            <rect x="1499" y="4" width="29" height="18" fill="#000" />
            <Label x="1514" y="18" $color="#fff">4-27</Label>
            {[81, 140, ...TIMES.map((t) => t[0]), 1515].map((x) => (
              <line key={x} x1={x} x2={x} y1="0" y2="4" stroke="#000" strokeWidth="2" />
            ))}
            {TIMES.map(([x, t]) => <Label key={t} x={x} y="18">{t}</Label>)}
          </TextLayer>
        </TimeCanvas>
        <CornerBadge>4</CornerBadge>
      </TimeRow>
      <ScrollTrack>
        <ScrollButton aria-label="Scroll left"><Chevron /></ScrollButton>
        <ScrollButton $push aria-label="Scroll position">
          <svg width="12" height="12"><path d="M2 1v10M6 1v10M10 1v10" stroke="#8fa4e2" /></svg>
        </ScrollButton>
        <ScrollButton aria-label="Scroll right"><Chevron right /></ScrollButton>
      </ScrollTrack>
    </ChildBody>
  );
}

function SideChart() {
  return (
    <ChildBody $edge={0}>
      <PlotRow>
        <Plot>
          <Canvas>
            <rect x="91" y="22" width="40" height="926" fill="#eeeeee" />
            <Shades x0={7} data={SIDE_SHADES} y={lateY} />
            {SIDE_BARS.map((b, i) => <Candle key={i} x={7 + i * STEP} bar={b} y={lateY} />)}
            <line x1="0" x2="100%" y1="533" y2="533" stroke="#111" strokeWidth="1" />
            <line x1="0" x2="100%" y1="948" y2="948" stroke="#222" strokeWidth="2" />
            <MacdLines x0={7} values={SIDE_MACD} zero={1115} seed={473} />
            <TextLayer>
              <Label x="6" y="964">MACD:</Label>
              <Label x="57" y="964" $color={BLUE}>MACD: 20.500</Label>
            </TextLayer>
          </Canvas>
          <HeaderLine>[SIM]  Trade: 2@157325</HeaderLine>
          <SecondLine>NPL: -325.00C</SecondLine>
          <Pin $x={12} $y={47}><Banner>Chicago 12:22:53</Banner></Pin>
          <Pin $x={53} $y={117}><Tag $bg="#000">S|Lmt| 158350</Tag></Pin>
          <Pin $x={53} $y={245}><Tag $bg="#000">S|Lmt| 158350</Tag></Pin>
          <Pin $x={53} $y={372}><Tag $bg={GREEN} $fg={MINT}>P/L: 0.00C</Tag></Pin>
          <Pin $x={53} $y={474}><Tag $bg={ORANGE} $fg={CREAM}>S|Stop| 157225</Tag></Pin>
          <Crosshair />
        </Plot>
      </PlotRow>
      <TimeRow>
        <TimeCanvas>
          <TextLayer>
            <rect x="0" y="4" width="106" height="18" fill="#000" />
            <Label x="-8" y="18" $color="#fff">04-23 12:13:23</Label>
          </TextLayer>
        </TimeCanvas>
      </TimeRow>
      <ScrollTrack><ScrollButton aria-label="Scroll left"><Chevron /></ScrollButton></ScrollTrack>
    </ChildBody>
  );
}

export default function App() {
  return (
    <Page>
      <GlobalStyle />
      <Desktop>
        <Taskbar>
          <StartOrb aria-label="Start" />
          <Grip />
          {["er ...", "Ra...", "2 ...", "Ra...", "Mi...", "96...", "E_...", "E_..."].map((t, i) => (
            <TaskButton key={i} $active={i === 7}>{t}</TaskButton>
          ))}
          <Tray />
        </Taskbar>
        <TaskbarEdge />
        <TradeWindow>
          <TitleBar $kind="active" $h={38} $pad={7}>
            <Globe />
            <TitleText>SC [SIM] CME_Eq-ES-CME_20130600_ESM3  #3  SIM:E-mini SP 500 ...</TitleText>
            <Caption gap={5} />
          </TitleBar>
          <TradeFrame>
            <MenuBar $h={28}>
              {["Chart", "Trade", "Window"].map((m) => <MenuItem key={m}>{m}</MenuItem>)}
            </MenuBar>
            <TradeBody>
              <TradeForm />
              <PriceLadder />
            </TradeBody>
          </TradeFrame>
        </TradeWindow>
        <MainWindow>
          <TitleBar $kind="idle" $h={40} $pad={7}>
            <Globe />
            <TitleText>Sierra Chart 965 CTS T4 2013-04-26  12:22:53 Fri  SP 500.cht [SIM] Con:25907</TitleText>
          </TitleBar>
          <MainBody>
            <MenuBar $h={27} $idle>
              {["File", "Edit", "Chart", "Analysis", "Tools", "Spreadsheet", "Trade", "Global Settings", "Window", "CB", "CW", "Help"].map((m) => (
                <MenuItem key={m}>{m}</MenuItem>
              ))}
            </MenuBar>
            <Toolbar>
              <ToolGroups>
                {GROUPS.map((g) => (
                  <ToolGroup key={g[0]} $n={g.length}>
                    {g.map((b) => (
                      <ToolButton key={b} $small={b === "1836t"} aria-label={glyphs[b] ? "Bar spacing" : undefined}>
                        {glyphs[b] ?? b}
                      </ToolButton>
                    ))}
                  </ToolGroup>
                ))}
              </ToolGroups>
            </Toolbar>
            <ValuesBar>
              Chart Values: Y: 157325  2013-04-25  14:52:02  O:158050  H:158100  L:157950  C:157950  V:8027  T:1836  BV:5348  AV:2679
            </ValuesBar>
            <BookTabs>
              <BookTab $on>SP 500</BookTab>
              <BookTab>Crude Oil</BookTab>
            </BookTabs>
            <Mdi>
              <ChildWindow>
                <TitleBar $kind="idle" $h={40} $pad={6}>
                  <DocIcon />
                  <TitleText>CME_Eq-ES-CME_20130600_ESM3  1836 tick  #1  L:1  SIM:E-mini SP 500 Jun13</TitleText>
                  <Caption idle gap={5} />
                </TitleBar>
                <MainChart />
              </ChildWindow>
              <ChildWindow $width={119}>
                <TitleBar $kind="idle" $h={40} $pad={6}>
                  <DocIcon />
                  <TitleText>CME_Eq-ES-CME</TitleText>
                </TitleBar>
                <SideChart />
              </ChildWindow>
            </Mdi>
            <BottomTabs>
              <BottomTab><span>CME_Eq-ES-CME_20130600_ESM3</span><span>1836 tick</span><span>#1</span><span>L:1</span></BottomTab>
              <BottomTab $on><span>CME_Eq-ES-CME_20130600_ESM3</span><span>225 rng</span><span>#2</span><span>L:1</span></BottomTab>
            </BottomTabs>
          </MainBody>
        </MainWindow>
        <AnnotationLayer fill="none" stroke="#000" strokeWidth="2">
          <ellipse cx="500" cy="744" rx="48" ry="40" />
          <ellipse cx="763" cy="721" rx="48" ry="40" />
          <path d="M811 714L922 697M541 765L930 781" />
        </AnnotationLayer>
        <Note>{"This should be showing 25 and not\n50.  There is only 2 contracts and\neach contract is worth $12.50"}</Note>
      </Desktop>
    </Page>
  );
}
